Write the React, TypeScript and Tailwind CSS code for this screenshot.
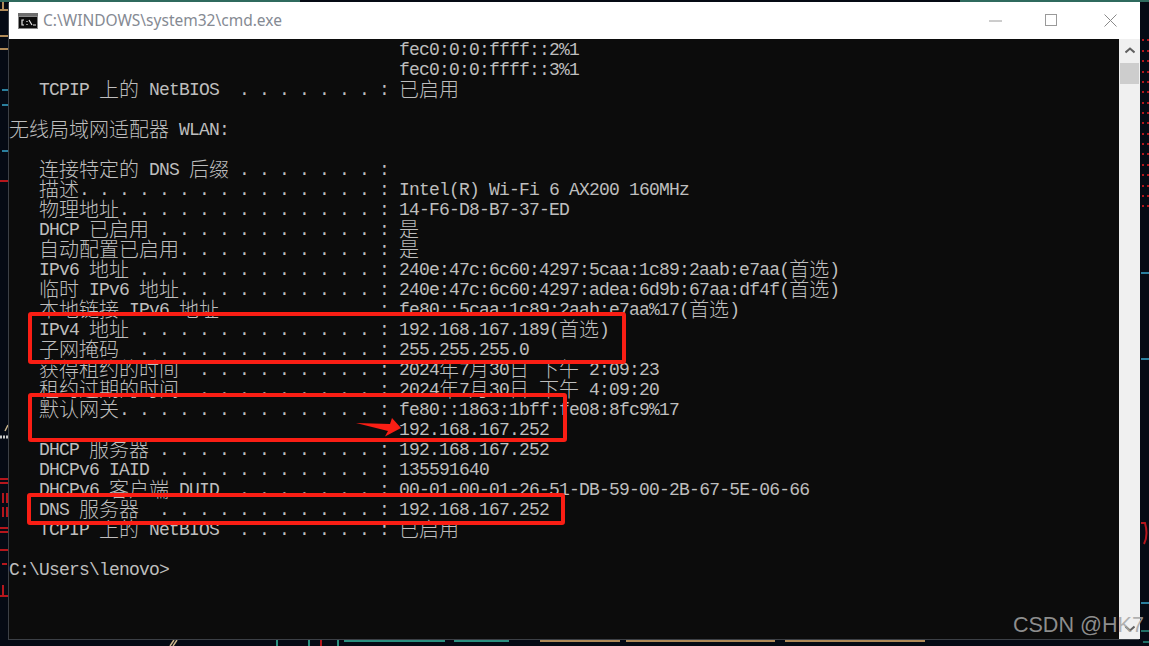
const dots = (n: number) => ". ".repeat(n);

const rows: string[] = [
  " ".repeat(39) + "fec0:0:0:ffff::2%1",
  " ".repeat(39) + "fec0:0:0:ffff::3%1",
  "   TCPIP 上的 NetBIOS  " + dots(7) + ": 已启用",
  "",
  "无线局域网适配器 WLAN:",
  "",
  "   连接特定的 DNS 后缀 " + dots(7) + ":",
  "   描述" + dots(15) + ": Intel(R) Wi-Fi 6 AX200 160MHz",
  "   物理地址" + dots(13) + ": 14-F6-D8-B7-37-ED",
  "   DHCP 已启用 " + dots(11) + ": 是",
  "   自动配置已启用" + dots(10) + ": 是",
  "   IPv6 地址 " + dots(12) + ": 240e:47c:6c60:4297:5caa:1c89:2aab:e7aa(首选)",
  "   临时 IPv6 地址" + dots(10) + ": 240e:47c:6c60:4297:adea:6d9b:67aa:df4f(首选)",
  "   本地链接 IPv6 地址" + dots(8) + ": fe80::5caa:1c89:2aab:e7aa%17(首选)",
  "   IPv4 地址 " + dots(12) + ": 192.168.167.189(首选)",
  "   子网掩码  " + dots(12) + ": 255.255.255.0",
  "   获得租约的时间  " + dots(9) + ": 2024年7月30日 下午 2:09:23",
  "   租约过期的时间  " + dots(9) + ": 2024年7月30日 下午 4:09:20",
  "   默认网关" + dots(13) + ": fe80::1863:1bff:fe08:8fc9%17",
  " ".repeat(39) + "192.168.167.252",
  "   DHCP 服务器 " + dots(11) + ": 192.168.167.252",
  "   DHCPv6 IAID " + dots(11) + ": 135591640",
  "   DHCPv6 客户端 DUID  " + dots(7) + ": 00-01-00-01-26-51-DB-59-00-2B-67-5E-06-66",
  "   DNS 服务器  " + dots(11) + ": 192.168.167.252",
  "   TCPIP 上的 NetBIOS  " + dots(7) + ": 已启用",
  "",
  "C:\\Users\\lenovo>",
];

function Row({ text }: { text: string }) {
  const parts = text.split(/([\u4e00-\u9fff]+)/);
  return (
    <div className="h-5 overflow-visible whitespace-pre leading-5">
      {parts.map((p, i) =>
        i % 2 === 1 ? (
          <span key={i} className="inline-block h-5 align-top font-['Noto_Sans_CJK_SC',sans-serif] text-[20px] font-light leading-5">
            {p}
          </span>
        ) : (
          <span key={i} className="inline-block h-5 align-top font-['Liberation_Mono',monospace] text-[18px] leading-[22px] tracking-[-0.8px]">
            {p}
          </span>
        ),
      )}
    </div>
  );
}

function Backdrop() {
  const redRows = [40, 51, 61, 72, 82, 92, 103, 113, 123, 134, 144, 154, 165, 175, 186, 196, 206];
  return (
    <svg className="absolute inset-0" width="1149" height="646" viewBox="0 0 1149 646" fill="none">
      <g stroke="#b08a58" strokeWidth="2">
        <path d="M0 10H8M0 36H8M0 49H8M3 0V9" />
        <path d="M540 641H620M626 641H775M785 641H925" />
      </g>
      <path d="M960 1H1149M0 1H300" stroke="#2f6a5e" strokeWidth="2" />
      <g stroke="#2a7f9e" strokeWidth="2">
        <path d="M2 90H8M2 105H8M2 151H8" />
        <path d="M1141 273H1149M1141 359H1149M1141 603H1149" />
      </g>
      <g stroke="#b5161c" strokeWidth="2">
        <path d="M0 181H8M0 479H8M0 483H8M0 528H8M0 532H8M0 550H8M2 564H7M0 596H8M3 585V596" />
        <path d="M3 493V503M7 493V503M3 507V517M7 507V517" />
        <path d="M1141 523H1145C1147 530 1147 538 1144 544" />
        <path d="M321 640V646" />
      </g>
      <g stroke="#b5161c" strokeWidth="2" strokeDasharray="2 3">
        {redRows.map((y) => (
          <path key={y} d={`M1142 ${y}H1149`} />
        ))}
      </g>
      <path d="M0 437H8" stroke="#c9c9c9" strokeWidth="3" strokeDasharray="2 1" />
      <path d="M5 431L8 425M170 646L174 640M173 646L177 640" stroke="#c8b48a" strokeWidth="1.5" />
      <path d="M344 641H445M454 641H509M277 640V646M309 640V646M338 640V646" stroke="#2a9080" strokeWidth="2" />
      <path d="M1141 631H1149M1143 642H1149" stroke="#2a9080" strokeWidth="1.5" />
    </svg>
  );
}

function CmdIcon() {
  return (
    <svg width="20" height="16" viewBox="0 0 20 16" fill="none">
      <rect x="0" y="0" width="20" height="16" fill="#8a8a8a" />
      <rect x="0" y="0" width="20" height="3" fill="#6e6e6e" />
      <rect x="1" y="4" width="18" height="11" fill="#0c0c0c" />
      <path d="M6 7H4V12H6M9 8V9M9 11V12M11 7L14 12M15 12H18" stroke="#e8e8e8" strokeWidth="1.2" />
    </svg>
  );
}

export default function App() {
  return (
    <div className="relative h-[646px] w-[1149px] overflow-hidden bg-[#050a14] pl-[9px] pt-[2px]">
      <Backdrop />
      <div className="relative flex h-[637px] w-[1131px] flex-col shadow-[-1px_1px_0_#3c4046]">
        <div className="flex h-[37px] shrink-0 items-center bg-white pl-[9px]">
          <CmdIcon />
          <span className="ml-[5px] font-['Noto_Sans',sans-serif] text-[15.5px] text-[#858a93]">
            C:\WINDOWS\system32\cmd.exe
          </span>
          <div className="ml-auto flex items-center">
            <svg width="14" height="2" viewBox="0 0 14 2" className="mr-[42px]">
              <path d="M0 1H13" stroke="#9a9a9a" />
            </svg>
            <svg width="13" height="13" viewBox="0 0 13 13" className="mr-[46px]" fill="none">
              <rect x="0.5" y="0.5" width="11" height="11" stroke="#9a9a9a" />
            </svg>
            <svg width="13" height="13" viewBox="0 0 13 13" className="mr-[23px]" fill="none">
              <path d="M0.5 0.5L12.5 12.5M12.5 0.5L0.5 12.5" stroke="#8a8a8a" />
            </svg>
          </div>
        </div>
        <div className="flex min-h-0 flex-1">
          <div className="flex-1 overflow-hidden bg-[#0c0c0c] text-[#bebebe]">
            {rows.map((r, i) => (
              <Row key={i} text={r} />
            ))}
          </div>
          <div className="flex w-[21px] shrink-0 flex-col items-center bg-[#f0f0f0]">
            <svg width="10" height="7" viewBox="0 0 10 7" className="mt-[8px]" fill="none">
              <path d="M0.5 5.5L5 1.5L9.5 5.5" stroke="#606060" strokeWidth="2" />
            </svg>
            <div className="mt-[9px] h-[21px] w-[19px] bg-[#cdcdcd]" />
            <svg width="10" height="7" viewBox="0 0 10 7" className="mb-[7px] mt-auto" fill="none">
              <path d="M0.5 1.5L5 5.5L9.5 1.5" stroke="#606060" strokeWidth="2" />
            </svg>
          </div>
        </div>
        {/* red annotations drawn over the screenshot */}
        <div className="absolute left-[19px] top-[310px] h-[52px] w-[598px] rounded-[3px] border-4 border-[#fa1e14]" />
        <div className="absolute left-[19px] top-[391px] h-[49px] w-[539px] rounded-[3px] border-4 border-[#fa1e14]" />
        <div className="absolute left-[18px] top-[491px] h-[32px] w-[538px] rounded-[3px] border-4 border-[#fa1e14]" />
        <svg className="absolute left-[345px] top-[415px]" width="50" height="22" viewBox="0 0 50 22">
          <path d="M2 6L36 7L38 1L47 11L31 19.5L34 14Z" fill="#fa1e14" />
        </svg>
        <span className="absolute bottom-[2px] right-[-4px] font-['Liberation_Sans',sans-serif] text-[21.6px] leading-6 text-[rgba(165,165,165,0.85)]">
          CSDN @HK7
        </span>
      </div>
    </div>
  );
}
